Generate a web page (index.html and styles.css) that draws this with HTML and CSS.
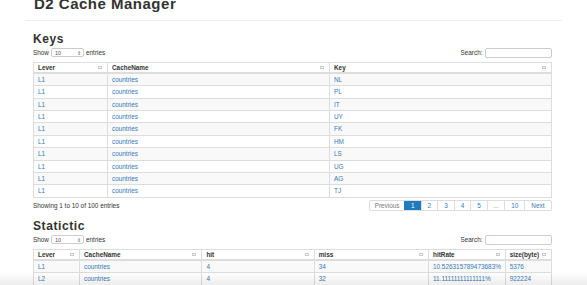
FILE: index.html
```html
<!DOCTYPE html>
<html>
<head>
<meta charset="utf-8">
<title>D2 Cache Manager</title>
<link rel="stylesheet" href="styles.css">
</head>
<body>
<header class="page-header">
  <h1 class="title">D2 Cache Manager</h1>
</header>

<main class="container">
  <section class="block">
    <h2 class="heading">Keys</h2>
    <div class="controls">
      <label class="length">Show <span class="select"><span>10</span><span class="arrows">&#8661;</span></span> entries</label>
      <label class="search">Search: <span class="input"></span></label>
    </div>
    <table class="grid">
      <colgroup><col class="c-lever1"><col class="c-name1"><col></colgroup>
      <thead>
        <tr><th><div class="th">Lever<span class="sort"></span></div></th><th><div class="th">CacheName<span class="sort"></span></div></th><th><div class="th">Key<span class="sort"></span></div></th></tr>
      </thead>
      <tbody>
        <tr><td><a>L1</a></td><td><a>countries</a></td><td><a>NL</a></td></tr>
        <tr><td><a>L1</a></td><td><a>countries</a></td><td><a>PL</a></td></tr>
        <tr><td><a>L1</a></td><td><a>countries</a></td><td><a>IT</a></td></tr>
        <tr><td><a>L1</a></td><td><a>countries</a></td><td><a>UY</a></td></tr>
        <tr><td><a>L1</a></td><td><a>countries</a></td><td><a>FK</a></td></tr>
        <tr><td><a>L1</a></td><td><a>countries</a></td><td><a>HM</a></td></tr>
        <tr><td><a>L1</a></td><td><a>countries</a></td><td><a>LS</a></td></tr>
        <tr><td><a>L1</a></td><td><a>countries</a></td><td><a>UG</a></td></tr>
        <tr><td><a>L1</a></td><td><a>countries</a></td><td><a>AG</a></td></tr>
        <tr><td><a>L1</a></td><td><a>countries</a></td><td><a>TJ</a></td></tr>
      </tbody>
    </table>
    <div class="footer-row">
      <div class="info">Showing 1 to 10 of 100 entries</div>
      <ul class="pager">
        <li class="page disabled prev">Previous</li>
        <li class="page active">1</li>
        <li class="page">2</li>
        <li class="page">3</li>
        <li class="page">4</li>
        <li class="page">5</li>
        <li class="page disabled ellipsis">&hellip;</li>
        <li class="page">10</li>
        <li class="page">Next</li>
      </ul>
    </div>
  </section>

  <section class="block block-second">
    <h2 class="heading">Statictic</h2>
    <div class="controls">
      <label class="length">Show <span class="select"><span>10</span><span class="arrows">&#8661;</span></span> entries</label>
      <label class="search">Search: <span class="input"></span></label>
    </div>
    <table class="grid">
      <colgroup><col class="c-lever2"><col class="c-name2"><col class="c-hit"><col class="c-miss"><col class="c-rate"><col></colgroup>
      <thead>
        <tr><th><div class="th">Lever<span class="sort"></span></div></th><th><div class="th">CacheName<span class="sort"></span></div></th><th><div class="th">hit<span class="sort"></span></div></th><th><div class="th">miss<span class="sort"></span></div></th><th><div class="th">hitRate<span class="sort"></span></div></th><th><div class="th">size(byte)<span class="sort"></span></div></th></tr>
      </thead>
      <tbody>
        <tr><td><a>L1</a></td><td><a>countries</a></td><td><a>4</a></td><td><a>34</a></td><td><a>10.526315789473683%</a></td><td><a>5376</a></td></tr>
        <tr><td><a>L2</a></td><td><a>countries</a></td><td><a>4</a></td><td><a>32</a></td><td><a>11.11111111111111%</a></td><td><a>922224</a></td></tr>
      </tbody>
    </table>
  </section>
</main>
<div class="shade"></div>
</body>
</html>
```

FILE: styles.css
```css
html, body {
  margin: 0;
  padding: 0;
  background: #fff;
  color: #333;
  font-family: "Liberation Sans", Arial, sans-serif;
  overflow: hidden;
}

.page-header {
  display: flow-root;
  margin: 0 25px;
  height: 20px;
  border-bottom: 1px solid #eee;
  padding-left: 9px;
}

.title {
  margin: -4.5px 0 0;
  font-size: 15px;
  line-height: 15px;
  font-weight: bold;
  letter-spacing: 0.5px;
  color: #333;
}

.container {
  margin-left: 33px;
  width: 518.5px;
}

.heading {
  margin: 11.8px 0 3px;
  font-size: 12px;
  line-height: 12px;
  font-weight: bold;
  letter-spacing: 0.6px;
  color: #333;
}

.block-second .heading {
  margin-top: 8.8px;
}

.controls {
  display: flex;
  justify-content: space-between;
  align-items: center;
  height: 10px;
  margin-bottom: 4.3px;
  font-size: 6.4px;
}

.length, .search {
  display: flex;
  align-items: center;
  gap: 2px;
}

.select {
  box-sizing: border-box;
  display: inline-flex;
  justify-content: space-between;
  align-items: center;
  width: 33px;
  height: 9px;
  padding: 0 2px 0 3px;
  border: 1px solid #ccc;
  border-radius: 2px;
  font-size: 5.5px;
  color: #555;
}

.arrows {
  font-size: 5px;
  color: #666;
}

.input {
  display: inline-block;
  box-sizing: border-box;
  width: 67px;
  height: 10px;
  border: 1px solid #ccc;
  border-radius: 2px;
}

.grid {
  width: 518.5px;
  table-layout: fixed;
  border-collapse: collapse;
  border: 1px solid #ddd;
  font-size: 6.4px;
}

.c-lever1 { width: 74px; }
.c-name1 { width: 222px; }
.c-lever2 { width: 46px; }
.c-name2 { width: 122.4px; }
.c-hit { width: 112.3px; }
.c-miss { width: 114.3px; }
.c-rate { width: 76.7px; }

.grid th {
  padding: 0 4px;
  line-height: 9px;
  text-align: left;
  font-weight: bold;
  color: #333;
  border: 1px solid #ddd;
  border-bottom: 2px solid #ddd;
}

.th {
  display: flex;
  justify-content: space-between;
  align-items: center;
}

.sort {
  box-sizing: border-box;
  width: 4px;
  height: 3px;
  border: 1px solid #c9c9c9;
  margin-right: 1px;
}

.grid td {
  padding: 0 4px;
  line-height: 11.35px;
  border: 1px solid #ddd;
  white-space: nowrap;
}

.grid tbody tr:nth-child(odd) {
  background: #f9f9f9;
}

.grid a {
  color: #337ab7;
  text-decoration: none;
}

.footer-row {
  display: flex;
  justify-content: space-between;
  align-items: center;
  margin-top: 2.3px;
  height: 11px;
  font-size: 6.4px;
}

.pager {
  display: flex;
  margin: 0;
  padding: 0;
  list-style: none;
  border: 1px solid #ddd;
  border-radius: 2px;
  box-sizing: border-box;
  height: 11px;
}

.page {
  padding: 0 6px;
  line-height: 9px;
  color: #337ab7;
  border-left: 1px solid #ddd;
}

.page:first-child {
  border-left: 0;
}

.page.prev {
  padding: 0 4.5px;
}

.page.ellipsis {
  padding: 0 5px;
}

.page.disabled {
  color: #777;
}

.page.active {
  background: #1f7bbd;
  color: #fff;
  border-left-color: #1f7bbd;
}

.shade {
  position: fixed;
  left: 0;
  right: 0;
  bottom: 0;
  height: 13px;
  background: linear-gradient(to bottom, rgba(0,0,0,0), rgba(0,0,0,0.07));
  pointer-events: none;
}
```
